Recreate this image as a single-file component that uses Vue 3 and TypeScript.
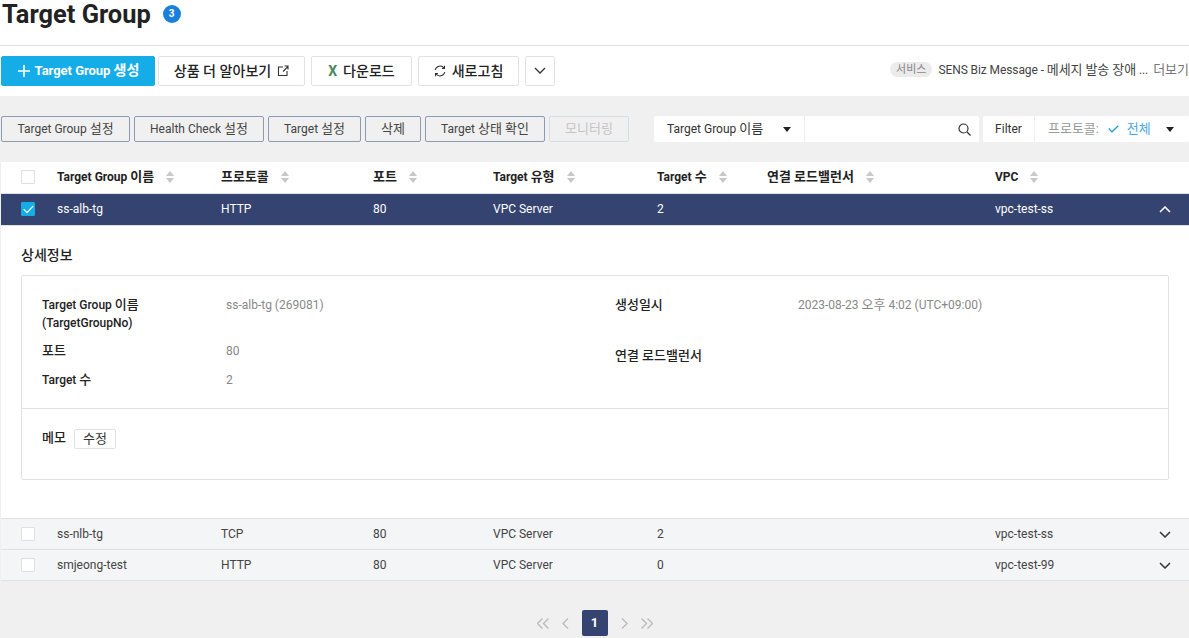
<template>
  <div class="page">
    <header class="title-bar">
      <h1>Target Group</h1>
      <span class="count">3</span>
    </header>

    <div class="toolbar">
      <button class="btn primary">
        <svg width="12" height="12" viewBox="0 0 12 12"><path d="M6 0v12M0 6h12" stroke="#fff" stroke-width="1.6" fill="none" /></svg>
        <span class="primary-text"><Txt s="Target Group 생성" /></span>
      </button>
      <button class="btn w-more">
        <Txt s="상품 더 알아보기" />
        <svg width="12" height="12" viewBox="0 0 12 12" fill="none" stroke="#333" stroke-width="1.1"><path d="M6 2H1.5v8.5H10V6M6 6.5 11 1.5M7.5 1H11v3.5" /></svg>
      </button>
      <button class="btn w-down">
        <span class="excel">X</span>
        <Txt s="다운로드" />
      </button>
      <button class="btn w-refresh">
        <svg width="12" height="12" viewBox="0 0 12 12" fill="none" stroke="#333" stroke-width="1.1"><path d="M1.2 5A5 5 0 0 1 10 3M10.8 7A5 5 0 0 1 2 9" /><path d="M10.5 .8V3.4H8M1.5 11.2V8.6H4" /></svg>
        <Txt s="새로고침" />
      </button>
      <button class="btn w-chev">
        <svg width="12" height="7" viewBox="0 0 12 7" fill="none" stroke="#333" stroke-width="1.3"><path d="M1 1l5 5 5-5" /></svg>
      </button>
      <div class="notice">
        <span class="tag">서비스</span>
        <span class="notice-text"><Txt s="SENS Biz Message - 메세지 발송 장애 ..." /></span>
        <span class="more"><Txt s="더보기" /></span>
      </div>
    </div>

    <main class="content">
      <div class="filters">
        <button class="act w1"><Txt s="Target Group 설정" /></button>
        <button class="act w2"><Txt s="Health Check 설정" /></button>
        <button class="act w3"><Txt s="Target 설정" /></button>
        <button class="act w4"><Txt s="삭제" /></button>
        <button class="act w5"><Txt s="Target 상태 확인" /></button>
        <button class="act w6" disabled><Txt s="모니터링" /></button>
        <div class="search">
          <div class="select"><span><Txt s="Target Group 이름" /></span><i class="caret"></i></div>
          <div class="search-input">
            <svg width="13" height="13" viewBox="0 0 13 13" fill="none" stroke="#333" stroke-width="1.2"><circle cx="5.5" cy="5.5" r="4.5" /><path d="M9 9l3.5 3.5" /></svg>
          </div>
        </div>
        <div class="filter">
          <div class="filter-label">Filter</div>
          <div class="filter-value">
            <span class="proto"><Txt s="프로토콜" />:</span>
            <svg width="11" height="8" viewBox="0 0 11 8" fill="none" stroke="#1a9ad6" stroke-width="1.2"><path d="M.7 3.5 4 6.8 10.3 .8" /></svg>
            <span class="all"><Txt s="전체" /></span>
            <i class="caret"></i>
          </div>
        </div>
      </div>

      <section class="table">
        <div class="row head">
          <span class="check"></span>
          <span v-for="h in headers" :key="h" class="th">
            <span><Txt :s="h" /></span>
            <svg width="8" height="12" viewBox="0 0 8 12" fill="#c8c8c8"><path d="M4 0l4 5H0zM4 12 0 7h8z" /></svg>
          </span>
        </div>

        <template v-for="r in rows" :key="r.name">
          <div class="row" :class="r.open ? 'selected' : 'plain'">
            <span class="check" :class="{ checked: r.open }">
              <svg v-if="r.open" width="11" height="9" viewBox="0 0 11 9" fill="none" stroke="#fff" stroke-width="1.2"><path d="M.7 4.2 4 7.6 10.3 .8" /></svg>
            </span>
            <span>{{ r.name }}</span>
            <span>{{ r.protocol }}</span>
            <span>{{ r.port }}</span>
            <span>{{ r.type }}</span>
            <span>{{ r.targets }}</span>
            <span></span>
            <span>{{ r.vpc }}</span>
            <svg class="toggle" width="12" height="7" viewBox="0 0 12 7" fill="none" :stroke="r.open ? '#fff' : '#333'" stroke-width="1.5">
              <path :d="r.open ? 'M1 6l5-5 5 5' : 'M1 1l5 5 5-5'" />
            </svg>
          </div>

          <div v-if="r.open" class="detail">
            <h2>상세정보</h2>
            <div class="box">
              <div class="info">
                <dl class="col-left">
                  <dt class="two-line"><Txt s="Target Group 이름" /><br />(TargetGroupNo)</dt>
                  <dd>ss-alb-tg (269081)</dd>
                  <dt><Txt s="포트" /></dt>
                  <dd>80</dd>
                  <dt><Txt s="Target 수" /></dt>
                  <dd>2</dd>
                </dl>
                <dl class="col-right">
                  <dt><Txt s="생성일시" /></dt>
                  <dd>2023-08-23 <Txt s="오후" /> 4:02 (UTC+09:00)</dd>
                  <dt><Txt s="연결 로드밸런서" /></dt>
                  <dd></dd>
                </dl>
              </div>
              <div class="memo">
                <strong><Txt s="메모" /></strong>
                <button class="edit"><Txt s="수정" /></button>
              </div>
            </div>
          </div>
        </template>
      </section>

      <nav class="pager">
        <svg width="12" height="11" viewBox="0 0 12 11" fill="none" stroke="#bbb" stroke-width="1.4"><path d="M5.5 .5l-5 5 5 5M11.5 .5l-5 5 5 5" /></svg>
        <svg class="single" width="7" height="11" viewBox="0 0 7 11" fill="none" stroke="#bbb" stroke-width="1.4"><path d="M6 .5l-5 5 5 5" /></svg>
        <span class="current">1</span>
        <svg class="single" width="7" height="11" viewBox="0 0 7 11" fill="none" stroke="#bbb" stroke-width="1.4"><path d="M1 .5l5 5-5 5" /></svg>
        <svg width="12" height="11" viewBox="0 0 12 11" fill="none" stroke="#bbb" stroke-width="1.4"><path d="M.5 .5l5 5-5 5M6.5 .5l5 5-5 5" /></svg>
      </nav>
    </main>
  </div>
</template>

<script setup lang="ts">
import { h } from 'vue';

interface TargetGroup {
  name: string;
  protocol: string;
  port: number;
  type: string;
  targets: number;
  vpc: string;
  open: boolean;
}

// hangul runs sit a little larger than the latin text around them
const Txt = (props: { s: string }) =>
  props.s
    .split(/([가-힣]+(?: [가-힣]+)*)/)
    .map((part, i) => (i % 2 ? h('span', { class: 'ko' }, part) : part));
Txt.props = ['s'];

const headers = ['Target Group 이름', '프로토콜', '포트', 'Target 유형', 'Target 수', '연결 로드밸런서', 'VPC'];

const rows: TargetGroup[] = [
  { name: 'ss-alb-tg', protocol: 'HTTP', port: 80, type: 'VPC Server', targets: 2, vpc: 'vpc-test-ss', open: true },
  { name: 'ss-nlb-tg', protocol: 'TCP', port: 80, type: 'VPC Server', targets: 2, vpc: 'vpc-test-ss', open: false },
  { name: 'smjeong-test', protocol: 'HTTP', port: 80, type: 'VPC Server', targets: 0, vpc: 'vpc-test-99', open: false }
];
</script>

<style>
html,
body {
  margin: 0;
  background: #f0f0f0;
  overflow: hidden;
}

.ko {
  font-size: 1.083em;
}
</style>

<style scoped>
.page {
  height: 638px;
  overflow: hidden;
  font-family: Roboto, "Noto Sans CJK KR", sans-serif;
  font-size: 12px;
  line-height: 16px;
  color: #222;
  background: #f0f0f0;
}

.title-bar {
  height: 46px;
  background: #fff;
  border-bottom: 1px solid #e2e2e2;
  display: flex;
  align-items: flex-start;
  padding-left: 2px;
  box-sizing: border-box;
}

h1 {
  margin: 0;
  font-size: 25.4px;
  line-height: 29px;
  font-weight: 700;
  color: #222;
}

.count {
  width: 18px;
  height: 18px;
  margin: 5px 0 0 12px;
  border-radius: 50%;
  background: #1a7fd9;
  color: #fff;
  font-size: 10px;
  font-weight: 700;
  line-height: 18px;
  text-align: center;
}

.toolbar {
  height: 50px;
  background: #fff;
  display: flex;
  align-items: flex-start;
  padding: 10px 0 0 1px;
  box-sizing: border-box;
}

.btn {
  height: 30px;
  padding: 0 0 1px;
  display: flex;
  align-items: center;
  justify-content: center;
  gap: 6px;
  background: #fff;
  border: 1px solid #e2e2e2;
  border-radius: 2px;
  font: inherit;
  font-size: 13px;
  font-weight: 500;
  color: #222;
  box-sizing: border-box;
}

.primary {
  width: 154px;
  padding-left: 1px;
  gap: 5px;
  background: #14ade8;
  border-color: #14ade8;
  color: #fff;
  font-weight: 700;
}

.primary-text {
  letter-spacing: -0.03px;
}

.w-more {
  width: 147px;
  margin-left: 3px;
}

.w-down {
  width: 101px;
  margin-left: 6px;
}

.w-refresh {
  width: 101px;
  margin-left: 6px;
}

.w-chev {
  width: 30px;
  margin-left: 6px;
}

.excel {
  color: #4a8a5c;
  font-size: 14px;
  font-weight: 700;
}

.notice {
  margin-left: auto;
  height: 27px;
  display: flex;
  align-items: center;
  white-space: nowrap;
  color: #444;
}

.tag {
  padding: 0 6px;
  height: 15px;
  line-height: 15px;
  border-radius: 8px;
  background: #ebebeb;
  color: #888;
  font-size: 11px;
}

.notice-text {
  margin-left: 6px;
  letter-spacing: -0.09px;
}

.more {
  margin-left: 5px;
  color: #777;
}

.filters {
  height: 66px;
  padding: 20px 0 0 1px;
  display: flex;
  align-items: flex-start;
  box-sizing: border-box;
}

.act {
  height: 26px;
  padding: 0;
  margin-right: 4px;
  background: #f0f0f0;
  border: 1px solid #8d9ab4;
  border-radius: 2px;
  font: inherit;
  color: #444;
  box-sizing: border-box;
}

.w1 { width: 129px; }
.w2 { width: 130px; }
.w3 { width: 93px; }
.w4 { width: 56px; }
.w5 { width: 120px; }

.w6 {
  width: 80px;
  margin-right: 25px;
  border-color: #d8dde4;
  color: #c4c4c4;
}

.search,
.filter {
  height: 26px;
  display: flex;
  background: #fff;
  border-radius: 2px;
}

.search {
  width: 325px;
}

.select {
  width: 151px;
  padding: 0 13px;
  display: flex;
  align-items: center;
  justify-content: space-between;
  border-right: 1px solid #eee;
  box-sizing: border-box;
  color: #333;
}

.search-input {
  flex: 1;
  display: flex;
  align-items: center;
  justify-content: flex-end;
  padding-right: 8px;
}

.caret {
  width: 0;
  height: 0;
  border-left: 4px solid transparent;
  border-right: 4px solid transparent;
  border-top: 5px solid #222;
}

.filter {
  width: 206px;
  margin-left: 4px;
}

.filter-label {
  width: 52px;
  line-height: 26px;
  text-align: center;
  border-right: 1px solid #eee;
  box-sizing: border-box;
  color: #333;
}

.filter-value {
  flex: 1;
  display: flex;
  align-items: center;
  padding: 0 15px 0 13px;
}

.proto {
  color: #999;
  margin-right: 9px;
}

.all {
  color: #4aa9e0;
  margin-left: 8px;
}

.filter-value .caret {
  margin-left: auto;
}

.table {
  margin-left: 1px;
  background: #fff;
}

.row {
  display: grid;
  grid-template-columns: 56px 164px 152px 120px 164px 110px 228px 1fr 12px;
  align-items: center;
  height: 31px;
  padding-right: 18px;
  border-bottom: 1px solid #e2e2e2;
  box-sizing: border-box;
}

.check {
  width: 14px;
  height: 14px;
  margin-left: 20px;
  background: #fff;
  border: 1px solid #e0e0e0;
  border-radius: 1px;
  box-sizing: border-box;
  display: flex;
  align-items: center;
  justify-content: center;
}

.check.checked {
  background: #14ade8;
  border-color: #14ade8;
}

.head {
  height: 32px;
  padding-bottom: 1px;
  font-weight: 700;
  color: #222;
}

.th {
  display: flex;
  align-items: center;
  gap: 12px;
  white-space: nowrap;
}

.selected {
  height: 32px;
  padding-bottom: 1px;
  background: #354370;
  color: #fff;
}

.plain {
  background: #f4f5f7;
  color: #444;
}

.detail {
  height: 293px;
  padding: 0 20px;
  box-sizing: border-box;
  border-bottom: 1px solid #e2e2e2;
}

h2 {
  margin: 0;
  padding-top: 19px;
  font-size: 14px;
  line-height: 20px;
  font-weight: 500;
}

.box {
  margin-top: 10px;
  height: 205px;
  border: 1px solid #e2e2e2;
  border-radius: 2px;
  box-sizing: border-box;
}

.info {
  height: 133px;
  padding: 20px 20px 0;
  display: grid;
  grid-template-columns: 573px 1fr;
  border-bottom: 1px solid #e2e2e2;
  box-sizing: border-box;
}

dl {
  margin: 0;
  display: grid;
  grid-template-columns: 184px 1fr;
  align-content: start;
  line-height: 18px;
}

.col-right {
  grid-template-columns: 183px 1fr;
}

dt {
  font-weight: 500;
  color: #222;
  height: 29px;
}

dd {
  margin: 0;
  height: 29px;
  color: #888;
}

.two-line {
  height: 46px;
}

.col-left dd:first-of-type {
  height: 46px;
}

.col-right dd:first-of-type {
  height: 51px;
}

.memo {
  padding: 20px 20px 0;
  display: flex;
  align-items: flex-start;
  gap: 8px;
}

.memo strong {
  font-weight: 500;
  line-height: 18px;
}

.edit {
  width: 42px;
  height: 20px;
  padding: 0;
  background: #fff;
  border: 1px solid #e2e2e2;
  border-radius: 2px;
  font: inherit;
  color: #333;
}

.pager {
  margin-top: 29px;
  height: 26px;
  display: flex;
  align-items: center;
  justify-content: center;
}

.pager .single {
  margin: 0 13px;
}

.current {
  width: 26px;
  height: 26px;
  line-height: 26px;
  text-align: center;
  background: #354370;
  color: #fff;
  font-size: 13px;
  font-weight: 700;
  border-radius: 2px;
}
</style>
